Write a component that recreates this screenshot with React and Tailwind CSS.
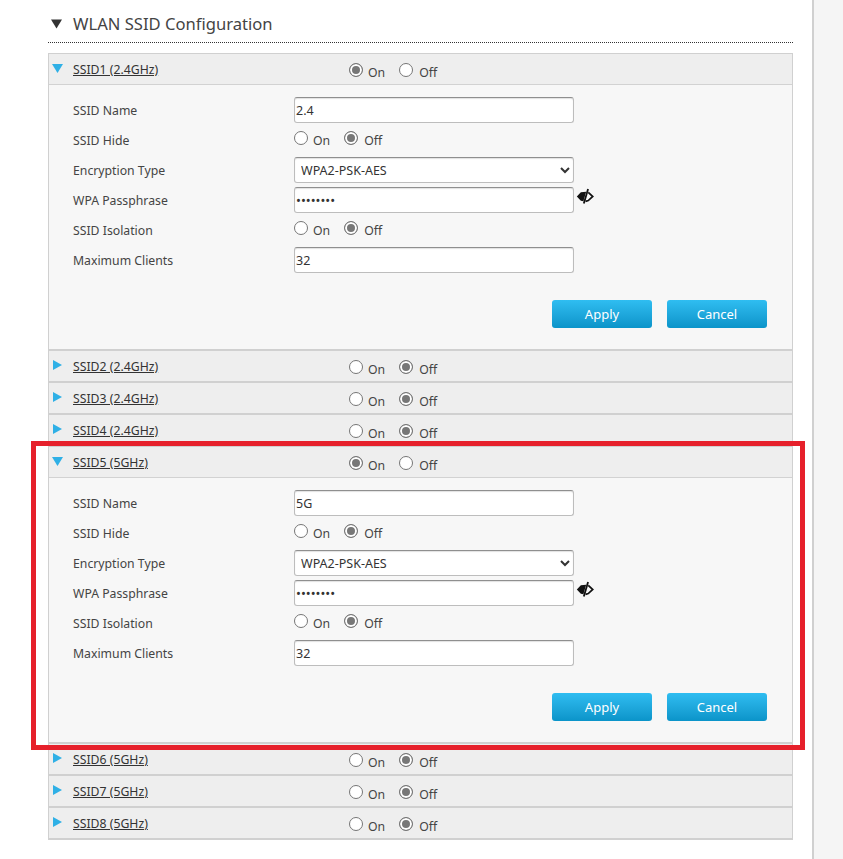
import React from "react";

const font = { fontFamily: '"Noto Sans", "Open Sans", sans-serif' };

function Radio({ name, checked }) {
  return (
    <input
      type="radio"
      name={name}
      defaultChecked={checked}
      className="appearance-none m-0 w-[14px] h-[14px] rounded-full border border-[#767676] bg-white checked:bg-[#777777] checked:shadow-[inset_0_0_0_2px_#ffffff] relative -top-[1px]"
    />
  );
}

function OnOff({ name, on }) {
  return (
    <div className="flex items-center gap-[14px]">
      <label className="flex items-center gap-[5px]">
        <Radio name={name} checked={on} />
        <span className="relative top-[2px]">On</span>
      </label>
      <label className="flex items-center gap-[6px]">
        <Radio name={name} checked={!on} />
        <span className="relative top-[2px]">Off</span>
      </label>
    </div>
  );
}

function EyeSlash() {
  return (
    <svg width="18" height="17" viewBox="0 0 17 16" className="ml-[2px] mb-[7px]">
      <path d="M0.8 8 L4.6 3.9 L9.6 3.4 L7 12.4 L4.6 12.1 Z" fill="#111" />
      <path d="M11.6 4.2 L15.8 8 L11.6 11.8 L9 12.6" fill="none" stroke="#111" strokeWidth="1.6" />
      <path d="M11.4 1 L7.4 14.6" stroke="#111" strokeWidth="1.7" />
    </svg>
  );
}

const boxClass =
  "w-[280px] h-[26px] rounded-[3px] border border-[#bdbdbd] border-t-[#8f8f8f] bg-white text-[12.5px] text-[#333] outline-none shadow-[inset_0_1px_1px_rgba(0,0,0,0.12)]";

function FieldRow({ label, children }) {
  return (
    <div className="flex items-center h-[30px]">
      <div className="w-[221px] shrink-0 text-[#444] relative top-[1px]">{label}</div>
      {children}
    </div>
  );
}

function Arrow({ open }) {
  return open ? (
    <svg width="11" height="9" viewBox="0 0 11 9"><path d="M0 0 H11 L5.5 9 Z" fill="#2fb0e6" /></svg>
  ) : (
    <svg width="9" height="10" viewBox="0 0 9 10" className="ml-[1px]"><path d="M0 0 V10 L9 5 Z" fill="#2fb0e6" /></svg>
  );
}

function Header({ title, on, open }) {
  return (
    <div
      className={`flex items-center bg-[#eeeeee] ${open ? "h-[31px] border-b border-[#d2d2d2]" : "h-[32px] border-b-2 border-[#d0d0d0]"}`}
    >
      <div className="w-[24px] pl-[3px] shrink-0 flex justify-start relative -top-[1px]">
        <Arrow open={open} />
      </div>
      <div className="w-[276px] shrink-0 underline text-[#333] relative top-[1px]">{title}</div>
      <div className="relative top-[2px]">
        <OnOff name={title} on={on} />
      </div>
    </div>
  );
}

function Panel({ id, name }) {
  return (
    <div className="bg-[#f7f7f7] h-[266px] border-b-2 border-[#d0d0d0] pl-[24px] pt-[10px]">
      <FieldRow label="SSID Name">
        <input className={boxClass + " px-[1px]"} defaultValue={name} />
      </FieldRow>
      <FieldRow label="SSID Hide">
        <div className="relative -top-[1px]">
          <OnOff name={id + "-hide"} on={false} />
        </div>
      </FieldRow>
      <FieldRow label="Encryption Type">
        <select className={boxClass + " px-[2px]"} defaultValue="WPA2-PSK-AES">
          <option>WPA2-PSK-AES</option>
        </select>
      </FieldRow>
      <FieldRow label="WPA Passphrase">
        <input type="password" className={boxClass + " px-[1px] text-[13px]"} defaultValue="12345678" />
        <EyeSlash />
      </FieldRow>
      <FieldRow label="SSID Isolation">
        <div className="relative -top-[1px]">
          <OnOff name={id + "-iso"} on={false} />
        </div>
      </FieldRow>
      <FieldRow label="Maximum Clients">
        <input className={boxClass + " px-[1px]"} defaultValue="32" />
      </FieldRow>
      <div className="flex justify-end gap-[15px] pr-[25px] mt-[25px]">
        {["Apply", "Cancel"].map((t) => (
          <button
            key={t}
            className="w-[100px] h-[28px] pt-[2px] rounded-[3px] text-white text-[13px] bg-gradient-to-b from-[#2fbdf1] to-[#0a94c9]"
          >
            {t}
          </button>
        ))}
      </div>
    </div>
  );
}

export default function App() {
  const rows = [
    { title: "SSID1 (2.4GHz)", on: true, open: true, name: "2.4" },
    { title: "SSID2 (2.4GHz)" },
    { title: "SSID3 (2.4GHz)" },
    { title: "SSID4 (2.4GHz)" },
    { title: "SSID5 (5GHz)", on: true, open: true, name: "5G" },
    { title: "SSID6 (5GHz)" },
    { title: "SSID7 (5GHz)" },
    { title: "SSID8 (5GHz)" },
  ];
  return (
    <div className="relative flex w-[843px] h-[859px] overflow-hidden bg-white text-[12.25px] text-[#444]" style={font}>
      <div className="w-[812px] shrink-0 pl-[48px] pr-[19px]">
        <div className="flex items-center h-[43px] pt-[6px] border-b border-dotted border-[#333]">
          <svg width="11" height="10" viewBox="0 0 11 10" className="ml-[3px] mr-[11px]"><path d="M0 0.5 H11 L5.5 9.5 Z" fill="#333" /></svg>
          <span className="text-[16.6px] text-[#444]">WLAN SSID Configuration</span>
        </div>
        <div className="mt-[10px] border border-[#d0d0d0] border-b-0 w-[745px]">
          {rows.map((r) => (
            <React.Fragment key={r.title}>
              <Header title={r.title} on={!!r.on} open={!!r.open} />
              {r.open && <Panel id={r.title} name={r.name} />}
            </React.Fragment>
          ))}
        </div>
      </div>
      <div className="flex-1 bg-[#f5f5f5] border-l-2 border-[#d0d0d0]" />
      <div className="absolute left-[31px] top-[441px] w-[774px] h-[309px] border-[5px] border-[#e6202b] pointer-events-none" />
    </div>
  );
}
